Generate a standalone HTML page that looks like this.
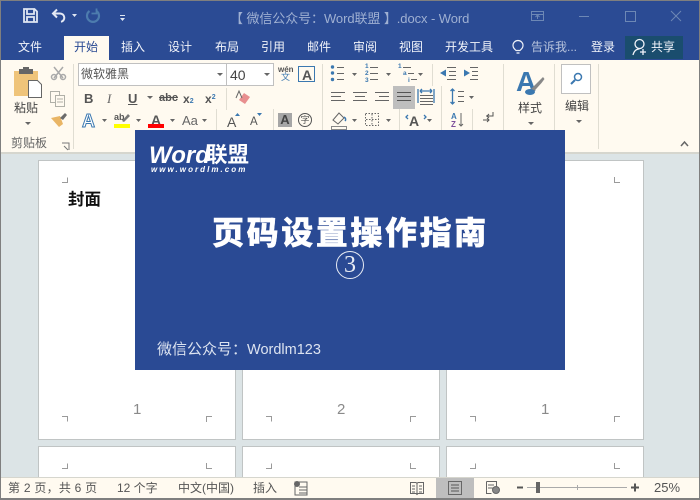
<!DOCTYPE html>
<html lang="zh"><head><meta charset="utf-8"><title>Word</title>
<style>
*{margin:0;padding:0;box-sizing:border-box}
html,body{width:700px;height:500px;overflow:hidden;background:#dce4e6}
body{position:relative;font-family:"Liberation Sans","Noto Sans CJK SC",sans-serif}
.a{position:absolute;white-space:nowrap;line-height:1}
.bar{position:absolute;left:0;top:0;width:700px;height:60px;background:#2b4b94}
.rib{position:absolute;left:0;top:60px;width:700px;height:94px;background:#fffaf0;border-bottom:2px solid #d6d6ce}
.tab{color:#f2f4fa;font-size:12px}
.rt{color:#444;font-size:12px}
.page{position:absolute;width:198px;background:#fff;border:1px solid #c0c4c4}
.num{font-size:15px;color:#8a8a8a}
.st{color:#555;font-size:12px}
.n{position:absolute;font:bold 6.500px/1 'Liberation Sans';color:#3b78b0}
svg{position:absolute;left:0;top:0}
</style></head><body>
<div class="bar"></div>
<div class="a" style="left:230px;top:12px;font-size:13px;letter-spacing:-.08px;color:#9fb0d2">【 微信公众号：Word联盟 】.docx - Word</div>
<div class="a" style="left:64px;top:36px;width:45px;height:24px;background:#fffaf0"></div>
<div class="a" style="left:625px;top:36px;width:58px;height:23px;background:#1a4d6e"></div>
<div class="a tab" style="left:18px;top:41px">文件</div>
<div class="a" style="left:74px;top:41px;font-size:12px;color:#2b4b94">开始</div>
<div class="a tab" style="left:121px;top:41px">插入</div>
<div class="a tab" style="left:168px;top:41px">设计</div>
<div class="a tab" style="left:215px;top:41px">布局</div>
<div class="a tab" style="left:261px;top:41px">引用</div>
<div class="a tab" style="left:307px;top:41px">邮件</div>
<div class="a tab" style="left:353px;top:41px">审阅</div>
<div class="a tab" style="left:399px;top:41px">视图</div>
<div class="a tab" style="left:445px;top:41px">开发工具</div>
<div class="a" style="left:531px;top:41px;font-size:12px;color:#b7c3dc">告诉我...</div>
<div class="a tab" style="left:591px;top:41px">登录</div>
<div class="a tab" style="left:651px;top:41px">共享</div>

<div class="rib"></div>
<div class="a" style="left:78px;top:63px;width:196px;height:23px;background:#fff;border:1px solid #c0c0c0"></div>
<div class="a" style="left:226px;top:63px;width:1px;height:23px;background:#c0c0c0"></div>
<div class="a" style="left:81px;top:68px;font-size:12px;color:#555">微软雅黑</div>
<div class="a" style="left:230px;top:68px;font-size:14px;color:#444">40</div>
<div class="a rt" style="left:14px;top:102px">粘贴</div>
<div class="a" style="left:11px;top:137px;font-size:12px;color:#666">剪贴板</div>
<div class="a rt" style="left:518px;top:102px">样式</div>
<div class="a rt" style="left:565px;top:100px">编辑</div>
<div class="a" style="left:84px;top:91px;font:bold 13px 'Liberation Sans';color:#555">B</div>
<div class="a" style="left:107px;top:91px;font:italic 13px 'Liberation Serif';color:#666">I</div>
<div class="a" style="left:128px;top:91px;font:bold 13px 'Liberation Sans';color:#555;text-decoration:underline">U</div>
<div class="a" style="left:159px;top:92px;font:bold 11px 'Liberation Sans';color:#555;text-decoration:line-through">abc</div>
<div class="a" style="left:183px;top:92px;font:bold 12px 'Liberation Sans';color:#555">x<span style="font-size:7px;color:#3b78b0">2</span></div>
<div class="a" style="left:205px;top:92px;font:bold 12px 'Liberation Sans';color:#555">x<span style="font-size:7px;color:#3b78b0;vertical-align:4px">2</span></div>
<div class="a" style="left:278px;top:65px;font:bold 8px 'Liberation Sans';color:#555">wén</div>
<div class="a" style="left:281px;top:73px;font-size:9px;color:#3b78b0">文</div>
<div class="a" style="left:302px;top:67px;font:bold 14px 'Liberation Sans';color:#555">A</div>
<div class="a" style="left:82px;top:111px;font:bold 18px 'Liberation Sans';color:#fff;-webkit-text-stroke:1px #3b78b0">A</div>
<div class="a" style="left:114px;top:112px;font:bold 9px 'Liberation Sans';color:#555">ab</div>
<div class="a" style="left:151px;top:112px;font:bold 14px 'Liberation Sans';color:#555">A</div>
<div class="a" style="left:182px;top:113px;font:13px 'Liberation Sans';color:#666">Aa</div>
<div class="a" style="left:227px;top:114px;font:14px 'Liberation Sans';color:#555">A</div>
<div class="a" style="left:250px;top:116px;font:11.500px 'Liberation Sans';color:#555">A</div>
<div class="a" style="left:278px;top:113px;width:14px;height:14px;background:#a6a6a6;font:bold 13px/14px 'Liberation Sans';color:#444;text-align:center">A</div>
<div class="a" style="left:298px;top:113px;width:14px;height:14px;border:1px solid #555;border-radius:50%;font-size:9px;line-height:12px;color:#555;text-align:center">字</div>
<div class="a" style="left:409px;top:113px;font:bold 14px 'Liberation Sans';color:#555">A</div>
<div class="a" style="left:451px;top:112px;font:bold 8px 'Liberation Sans';color:#3b78b0">A</div>
<div class="a" style="left:451px;top:120px;font:bold 8px 'Liberation Sans';color:#7d4f9c">Z</div>
<div class="a" style="left:516px;top:66px;font:bold 28px 'Liberation Sans';color:#3b78b0">A</div>
<div class="n" style="left:365px;top:64px">1</div><div class="n" style="left:365px;top:71px">2</div><div class="n" style="left:365px;top:78px">3</div>
<div class="n" style="left:398px;top:64px">1</div><div class="n" style="left:403px;top:71px">a</div><div class="n" style="left:408px;top:78px">i</div>

<svg width="700" height="500" fill="none">
<!-- QAT -->
<g stroke="#dfe6f2" stroke-width="1.800"><path d="M24 9h10.500l2.500 2.500V22H24z"/><path d="M27 9v5h7V9M27 22v-5h7v5"/></g>
<path d="M57 9.500l-4 4 4 4M53 13.500h7a4.200 4.200 0 0 1 1 8.300" stroke="#e4e9f4" stroke-width="2"/>
<path d="M72 14h5l-2.500 3zM120 18h5l-2.500 3z" fill="#dfe6f2"/><path d="M120 15.500h5" stroke="#dfe6f2"/>
<path d="M89.500 11a6 6 0 1 0 7 0" stroke="#4d7cae" stroke-width="2.200"/><path d="M96.500 8.500v5h-5" stroke="#4d7cae" stroke-width="1.800"/>
<!-- window buttons -->
<g stroke="#6d88b5" stroke-width="1"><rect x="531.500" y="11.500" width="12" height="9"/><path d="M531.500 14.500h12M537.500 19v-3M535.500 17l2-2 2 2"/>
<path d="M579 16.500h10"/><rect x="625.500" y="11.500" width="10" height="10"/><path d="M671 11l10 10M681 11l-10 10"/></g>
<!-- tell me / share -->
<path d="M516 50.500c-2-2-3-3-3-5a5 5 0 0 1 10 0c0 2-1 3-3 5zM516.500 53h3" stroke="#eef1f8" stroke-width="1.200"/>
<circle cx="639.500" cy="44" r="4.500" stroke="#f2f4fa" stroke-width="1.300"/>
<path d="M633 55c1-4 3-6 6.500-6M640 52h6M643 49v6" stroke="#f2f4fa" stroke-width="1.300"/>
<!-- clipboard -->
<rect x="14" y="71" width="24" height="25" fill="#efc47a"/>
<rect x="19" y="69" width="14" height="5" fill="#666"/><rect x="23" y="67" width="6" height="4" fill="#666"/>
<path d="M28.500 80.500h9l4 4v13h-13z" fill="#fff" stroke="#666"/>
<path d="M25 122h6l-3 3z" fill="#666"/>
<!-- scissors, copy, painter -->
<g stroke="#a9a9a9" stroke-width="1.500"><path d="M54 67l9 11M63 67l-9 11"/><circle cx="54" cy="77" r="2.500"/><circle cx="63" cy="77" r="2.500"/></g>
<g stroke="#b0b0a8"><rect x="50.500" y="91.500" width="9" height="11"/><rect x="55.500" y="95.500" width="9" height="11" fill="#fffaf0"/><path d="M57 99h6M57 102h6"/></g>
<path d="M51 118l9-2 3 8-4 3z" fill="#e9b565"/><path d="M60 118l5-5 2 2-4 5z" fill="#6b6b6b"/>
<path d="M62 143h7v7M64 146l4 4" stroke="#777"/>
<!-- group separators -->
<g fill="#e0ddd2">
<rect x="73" y="64" width="1" height="85"/><rect x="322" y="64" width="1" height="66"/><rect x="226" y="88" width="1" height="22"/>
<rect x="216" y="109" width="1" height="22"/><rect x="273" y="109" width="1" height="22"/><rect x="432" y="64" width="1" height="22"/>
<rect x="441" y="86" width="1" height="44"/><rect x="399" y="109" width="1" height="22"/><rect x="472" y="109" width="1" height="22"/>
<rect x="503" y="64" width="1" height="66"/><rect x="554" y="64" width="1" height="66"/><rect x="598" y="64" width="1" height="85"/>
</g>
<!-- dropdown arrows -->
<g fill="#666">
<path d="M217 73h6l-3 3zM264 73h6l-3 3zM147 96h6l-3 3zM102 119h5l-2.500 3zM136 119h5l-2.500 3zM170 119h5l-2.500 3zM202 119h5l-2.500 3zM352 73h5l-2.500 3zM386 73h5l-2.500 3zM418 73h5l-2.500 3zM469 96h5l-2.500 3zM352 119h5l-2.500 3zM386 119h5l-2.500 3zM427 119h5l-2.500 3zM528 122h6l-3 3zM576 120h6l-3 3z"/></g>
<path d="M681 146l3.500-4 3.500 4" stroke="#666" stroke-width="1.500"/>
<!-- font color chips -->
<rect x="114" y="124" width="16" height="4" fill="#ff0"/><rect x="148" y="124" width="16" height="4" fill="#f00"/>
<path d="M122 121l6-7 2 2-6 6z" fill="#777"/>
<path d="M235 116l2.500-3 2.500 3z" fill="#3b78b0"/><path d="M257 113h5l-2.500 3z" fill="#3b78b0"/>
<rect x="298.500" y="66.500" width="16" height="15" stroke="#3b78b0"/>
<path d="M244 93l6 4-5 7-6-4z" fill="#e88f8f"/><path d="M236 98l3-7 3 7" stroke="#666"/>
<!-- highlighted justify -->
<rect x="393" y="86" width="22" height="23" fill="#bebebe"/>
<!-- lists -->
<g fill="#3b78b0"><circle cx="332.500" cy="67" r="1.700"/><circle cx="332.500" cy="73" r="1.700"/><circle cx="332.500" cy="79.500" r="1.700"/>
<path d="M440 73l6-3.500v7zM470 73l-6-3.500v7z"/></g>
<g stroke="#666"><path d="M337 67.500h7M337 73.500h7M337 79.500h7M370 67.500h8M370 73.500h8M370 79.500h8M403 67.500h8M408 73.500h6M411 79.500h6"/>
<path d="M447 67.500h9M449 71.500h7M449 75.500h7M447 79.500h9M470 67.500h8M472 71.500h6M472 75.500h6M470 79.500h8"/>
<!-- alignment -->
<path d="M331 92.500h14M331 96.500h10M331 100.500h14M353 92.500h14M355 96.500h10M353 100.500h14M375 92.500h14M379 96.500h10M375 100.500h14"/>
<path d="M397 92.500h14M397 96.500h14M397 100.500h14" stroke="#555"/>
<path d="M420 95.500h13M420 98.500h13M420 101.500h13M420 104.500h13"/>
<path d="M458 91.500h6M458 96.500h6M458 101.500h6"/>
<rect x="365.500" y="113.500" width="13" height="12" stroke-dasharray="1.500 1.500"/><path d="M372 114v12M366 119.500h12" stroke-dasharray="1.500 1.500"/></g>
<g stroke="#3b78b0" stroke-width="1.300"><path d="M418 89v14M434 89v14M420 91h12M420 91l2-2M420 91l2 2M432 91l-2-2M432 91l-2 2"/>
<path d="M452.500 89v15M450.500 91l2-2 2 2M450.500 102l2 2 2-2"/><path d="M408 115l-2 2 2 2M424 115l2 2-2 2"/></g>
<path d="M461 113v13M459 124l2 2 2-2" stroke="#666"/>
<path d="M493 112v4h-7M489 114l-2 2 2 2M483 120h6M487 118l2 2-2 2" stroke="#555"/>
<path d="M333 120l6-7 5 5-6 6z" stroke="#666"/><rect x="331.500" y="126.500" width="15" height="3" stroke="#888"/>
<path d="M344 117c2 1 2 3 1 4" stroke="#3b78b0" stroke-width="1.500"/>
<!-- styles brush -->
<path d="M530 90l10-10 3-3 1.500 2-3 4-9 10z" fill="#888"/><ellipse cx="530" cy="92" rx="5" ry="3" fill="#3b78b0"/>
<!-- edit box -->
<rect x="561.500" y="64.500" width="29" height="29" fill="#fff" stroke="#c0c0c0"/>
<circle cx="578" cy="77" r="3.500" stroke="#3b78b0" stroke-width="1.500"/><path d="M575 80l-4 4" stroke="#3b78b0" stroke-width="2"/>
</svg>

<div class="page" style="left:38px;top:160px;height:280px"></div>
<div class="page" style="left:242px;top:160px;height:280px"></div>
<div class="page" style="left:446px;top:160px;height:280px"></div>
<div class="page" style="left:38px;top:446px;height:40px"></div>
<div class="page" style="left:242px;top:446px;height:40px"></div>
<div class="page" style="left:446px;top:446px;height:40px"></div>
<div class="a" style="left:68px;top:192px;font-size:16.500px;font-weight:700;color:#111">封面</div>
<div class="a num" style="left:133px;top:402px">1</div>
<div class="a num" style="left:337px;top:402px">2</div>
<div class="a num" style="left:541px;top:402px">1</div>
<svg width="700" height="500" fill="none" stroke="#9a9a9a">
<path d="M62 182.500h5.500v-5M614.500 177v5.500h5.500"/>
<path d="M62 416.500h5.500v5M206.500 422v-5.500h5.500M266 416.500h5.500v5M410.500 422v-5.500h5.500M470 416.500h5.500v5M614.500 422v-5.500h5.500"/>
<path d="M62 468.500h5.500v-5M206.500 463v5.500h5.500M266 468.500h5.500v-5M410.500 463v5.500h5.500M470 468.500h5.500v-5M614.500 463v5.500h5.500"/>
</svg>

<div class="a" style="left:135px;top:130px;width:430px;height:240px;background:#2a4a94"></div>
<div class="a" style="left:149px;top:142px;font:italic bold 24px 'Liberation Sans';color:#fff">Word</div>
<div class="a" style="left:206px;top:143px;font-size:21.500px;font-weight:700;color:#fff;font-family:'Noto Sans CJK SC',sans-serif">联盟</div>
<div class="a" style="left:151px;top:165px;font:italic bold 8px 'Liberation Sans';color:#fff;letter-spacing:2.050px">www.wordlm.com</div>
<div class="a" style="left:212px;top:215px;font-size:32px;font-weight:900;color:#fff;letter-spacing:2.600px;-webkit-text-stroke:.4px #fff;font-family:'Noto Sans CJK SC',sans-serif">页码设置操作指南</div>
<div class="a" style="left:336px;top:251px;width:28px;height:28px;border:1px solid #e8ecf4;border-radius:50%;font:24px/26px 'Liberation Serif';color:#e8ecf4;text-align:center">3</div>
<div class="a" style="left:157px;top:342px;font-size:15px;color:#dce3f0">微信公众号：<span style="font-size:14.500px">Wordlm123</span></div>

<div class="a" style="left:0;top:477px;width:700px;height:23px;background:#fffaf0;border-top:1px solid #d6d6ce"></div>
<div class="a st" style="left:8px;top:482px;letter-spacing:.25px">第 2 页，共 6 页</div>
<div class="a st" style="left:117px;top:482px">12 个字</div>
<div class="a st" style="left:178px;top:482px">中文(中国)</div>
<div class="a st" style="left:253px;top:482px">插入</div>
<div class="a" style="left:436px;top:478px;width:38px;height:22px;background:#bebebe"></div>
<div class="a st" style="left:654px;top:481px;font-size:13px">25%</div>
<svg width="700" height="500" fill="none" stroke="#666">
<path d="M295 482h12v13h-12zM299 487h8M299 490h8M299 493h8"/><circle cx="297" cy="484" r="2.500" fill="#666"/>
<path d="M410.500 482.500h5.500l1 1 1-1h5.500v11h-5.500l-1 1-1-1h-5.500zM417 484v10M412 486h3M412 489h3M412 492h3M419 486h3M419 489h3M419 492h3"/>
<rect x="448.500" y="481.500" width="13" height="13"/><path d="M451 485h8M451 488h8M451 491h8" stroke="#555"/>
<path d="M486.500 481.500h10v7M486.500 481.500v12h5M488 485h6M488 488h6"/><circle cx="496" cy="490" r="3.500" fill="#888"/>
<path d="M517 487.500h6M631 487.500h8M635 483.500v8" stroke="#555" stroke-width="2"/>
<path d="M527 487.500h100M577.500 485v5" stroke="#aaa"/>
<rect x="536" y="482" width="4" height="11" fill="#666" stroke="none"/>
</svg>
<div class="a" style="left:0;top:0;width:700px;height:500px;border:1px solid #7f7f7f;border-width:1px 1px 2px 1px;pointer-events:none"></div>
</body></html>
